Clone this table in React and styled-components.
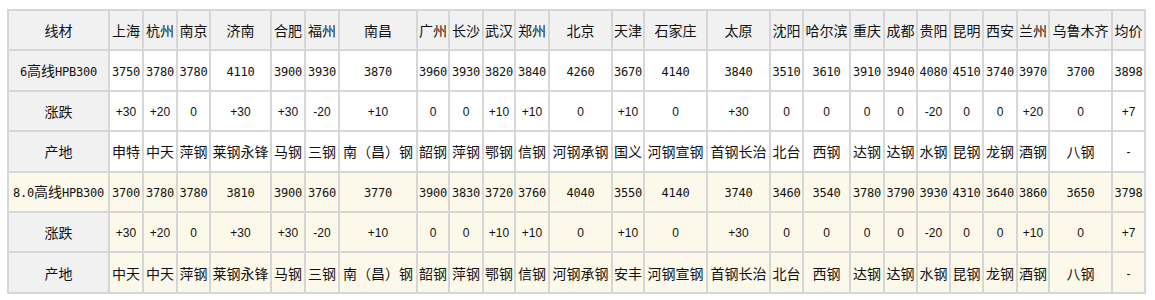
import React from "react";
import styled, { createGlobalStyle } from "styled-components";

const Global = createGlobalStyle`
  html, body { margin: 0; padding: 0; background: #ffffff; }
`;

const Page = styled.div`
  padding: 9px 0 0 7px;
  font-family: "Noto Sans CJK SC", sans-serif;
  color: #111111;
`;

const Table = styled.table`
  border-collapse: separate;
  border-spacing: 0;
  table-layout: fixed;
  width: 1139px;
  border: 1px solid #d6d6d6;
`;

const Row = styled.tr`
  height: 40.4px;
`;

const Cell = styled.td`
  border: 1px solid #d6d6d6;
  padding: 0;
  text-align: center;
  vertical-align: middle;
  white-space: nowrap;
  overflow: visible;
  font-size: 14px;
  line-height: 16px;
  background: ${(p) =>
    p.$tone === "gray" ? "#f1f1f1" : p.$tone === "cream" ? "#fdf9ea" : "#ffffff"};
`;

const Head = styled(Cell).attrs({ as: "th" })`
  font-weight: normal;
  background: #f1f1f1;
`;

const Mono = styled.span`
  font-family: "DejaVu Sans Mono", monospace;
  font-size: 12px;
  letter-spacing: -0.22px;
`;

const Change = styled.span`
  font-family: "Liberation Sans", Arial, sans-serif;
  font-size: 12px;
`;

const cities = [
  ["上海", 34], ["杭州", 34], ["南京", 33], ["济南", 61], ["合肥", 34], ["福州", 34],
  ["南昌", 78], ["广州", 32], ["长沙", 34], ["武汉", 32], ["郑州", 34], ["北京", 63],
  ["天津", 32], ["石家庄", 63], ["太原", 63], ["沈阳", 33], ["哈尔滨", 47], ["重庆", 34],
  ["成都", 33], ["贵阳", 33], ["昆明", 33], ["西安", 34], ["兰州", 32], ["乌鲁木齐", 63],
  ["均价", 33],
];

const blocks = [
  {
    lead: "6",
    tone: "white",
    labelTone: "gray",
    prices: "3750 3780 3780 4110 3900 3930 3870 3960 3930 3820 3840 4260 3670 4140 3840 3510 3610 3910 3940 4080 4510 3740 3970 3700 3898",
    changes: "+30 +20 0 +30 +30 -20 +10 0 0 +10 +10 0 +10 0 +30 0 0 0 0 -20 0 0 +20 0 +7",
    origins: "申特 中天 萍钢 莱钢永锋 马钢 三钢 南（昌）钢 韶钢 萍钢 鄂钢 信钢 河钢承钢 国义 河钢宣钢 首钢长治 北台 西钢 达钢 达钢 水钢 昆钢 龙钢 酒钢 八钢 -",
  },
  {
    lead: "8.0",
    tone: "cream",
    labelTone: "cream",
    prices: "3700 3780 3780 3810 3900 3760 3770 3900 3830 3720 3760 4040 3550 4140 3740 3460 3540 3780 3790 3930 4310 3640 3860 3650 3798",
    changes: "+30 +20 0 +30 +30 -20 +10 0 0 +10 +10 0 +10 0 +30 0 0 0 0 -20 0 0 +10 0 +7",
    origins: "中天 中天 萍钢 莱钢永锋 马钢 三钢 南（昌）钢 韶钢 萍钢 鄂钢 信钢 河钢承钢 安丰 河钢宣钢 首钢长治 北台 西钢 达钢 达钢 水钢 昆钢 龙钢 酒钢 八钢 -",
  },
];

function Block({ block }) {
  const prices = block.prices.split(" ");
  const changes = block.changes.split(" ");
  const origins = block.origins.split(" ");
  return (
    <>
      <Row>
        <Cell $tone={block.labelTone}>
          <Mono>{block.lead}</Mono>高线<Mono>HPB300</Mono>
        </Cell>
        {prices.map((v, i) => (
          <Cell key={i} $tone={block.tone}>
            <Mono>{v}</Mono>
          </Cell>
        ))}
      </Row>
      <Row>
        <Cell $tone="gray">涨跌</Cell>
        {changes.map((v, i) => (
          <Cell key={i} $tone={block.tone}>
            <Change>{v}</Change>
          </Cell>
        ))}
      </Row>
      <Row>
        <Cell $tone="gray">产地</Cell>
        {origins.map((v, i) => (
          <Cell key={i} $tone={block.tone}>
            {v === "-" ? <Change>-</Change> : v}
          </Cell>
        ))}
      </Row>
    </>
  );
}

export default function App() {
  return (
    <Page>
      <Global />
      <Table>
        <colgroup>
          <col style={{ width: 101 }} />
          {cities.map(([name, w]) => (
            <col key={name} style={{ width: w }} />
          ))}
        </colgroup>
        <tbody>
          <Row>
            <Head>线材</Head>
            {cities.map(([name]) => (
              <Head key={name}>{name}</Head>
            ))}
          </Row>
          {blocks.map((b) => (
            <Block key={b.lead} block={b} />
          ))}
        </tbody>
      </Table>
    </Page>
  );
}
